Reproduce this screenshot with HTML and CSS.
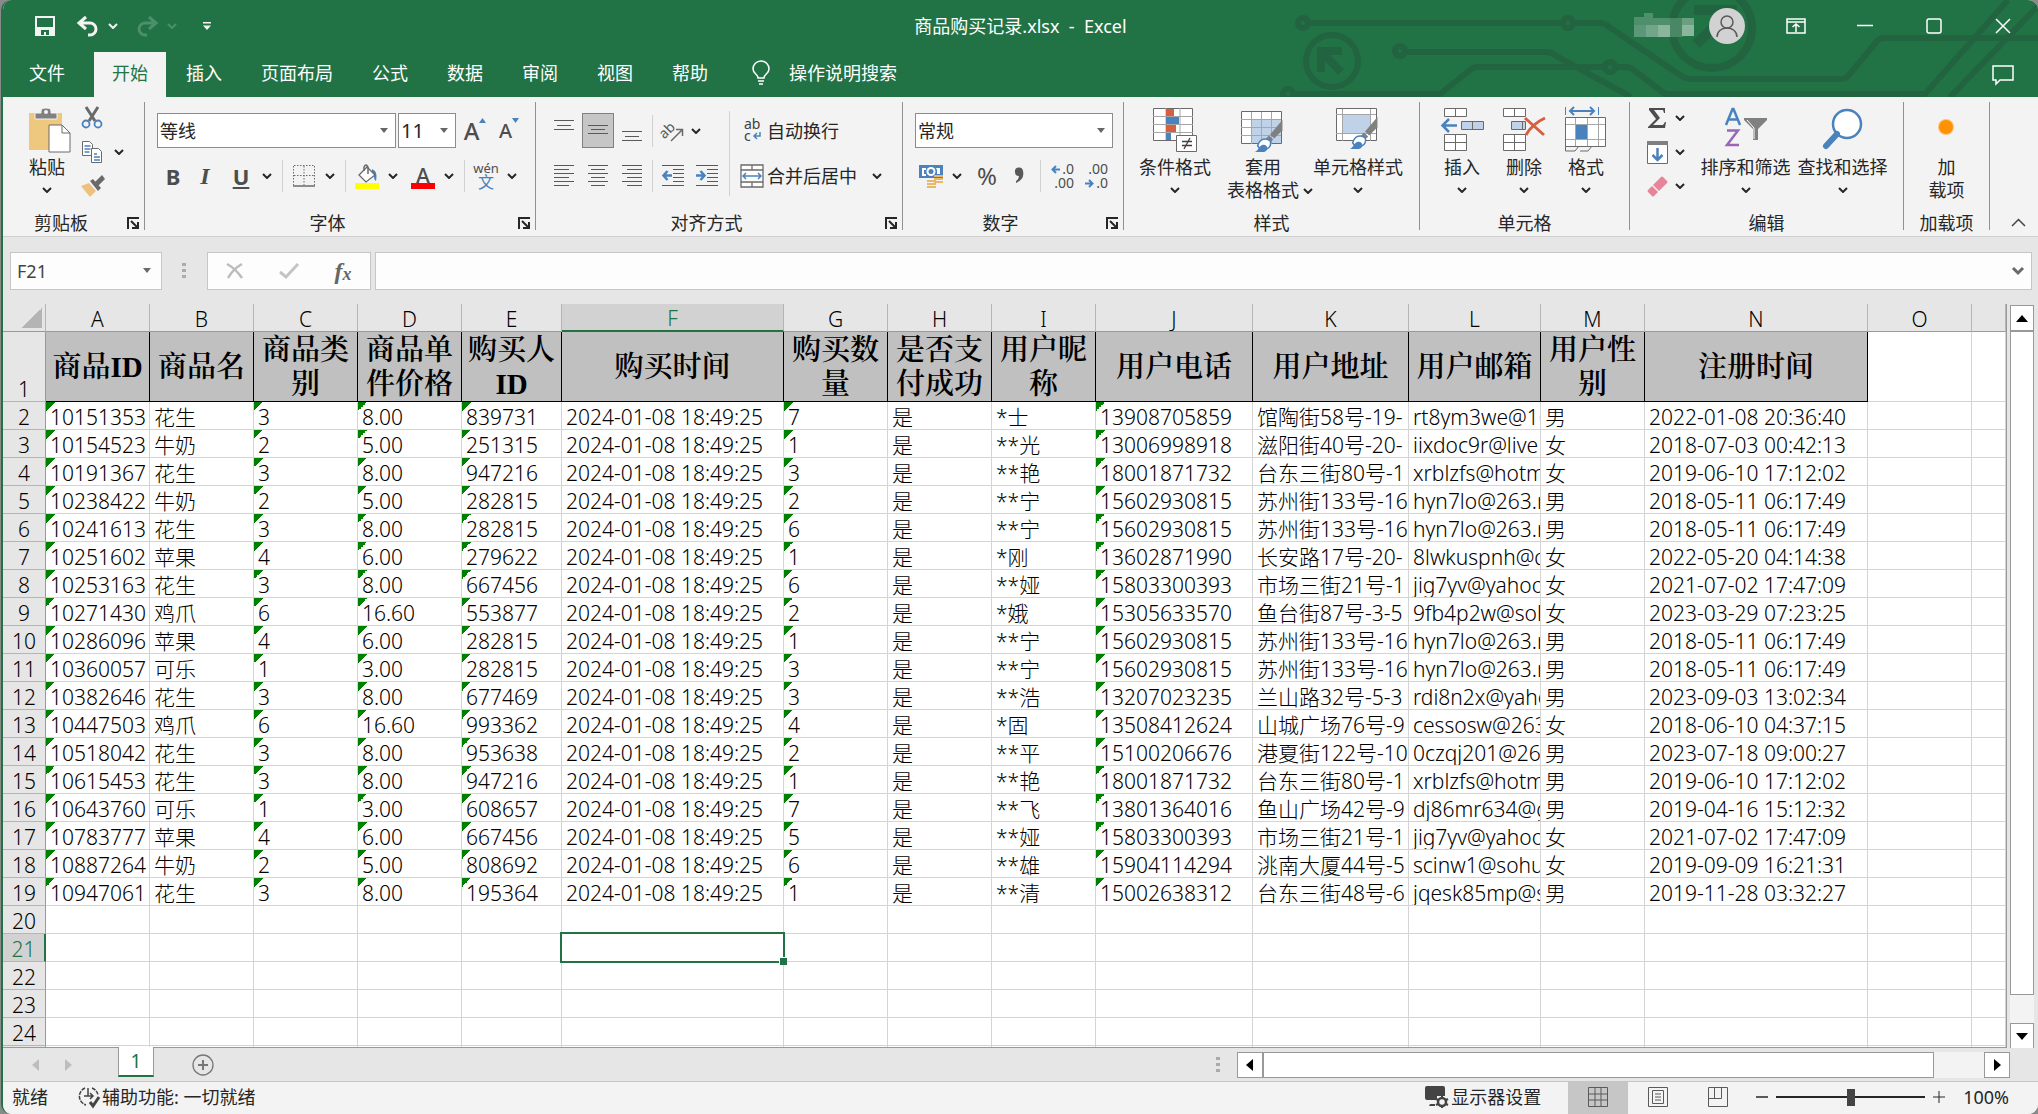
FILE: index.html
```html
<!DOCTYPE html>
<html lang="zh-CN">
<head>
<meta charset="utf-8">
<title>商品购买记录.xlsx - Excel</title>
<link rel="stylesheet" href="styles.css">
</head>
<body>
<svg class="defs" aria-hidden="true">
  <symbol id="caret" viewBox="0 0 10 6"><path d="M1 1l4 4 4-4" fill="none" stroke="currentColor" stroke-width="2"/></symbol>
  <symbol id="launch" viewBox="0 0 12 12"><path d="M1 12V1h11M4 4l6 6M11 5v6H5" fill="none" stroke="#262626" stroke-width="2"/></symbol>
  <symbol id="stylebrush" viewBox="0 0 27 32"><path d="M27 0v10l-8 8-4-4z" fill="#808080"/><path d="M14 15l4 4-3 3-4-4z" fill="#808080"/><path d="M3 25c2-7 8-8 12-5 2 5-2 10-9 9z" fill="#fff" stroke="#4a82bd" stroke-width="1.500"/><path d="M0 31c4-1 4-6 8-7 5-1 6 6 1 7z" fill="#4a82bd"/></symbol>
</svg>
<div class="window">
  <header class="top">
    <svg class="circuit" viewBox="0 0 798 97" width="798" height="97" fill="none" stroke="#236440" stroke-width="6" aria-hidden="true">
      <circle cx="63" cy="23" r="5"/><circle cx="328" cy="23" r="5"/><path d="M68 23H323M333 23H360Q365 23 369 27L440 75Q445 79 450 79H600Q606 79 609 75L637 41Q640 38 645 38H798"/>
      <circle cx="160" cy="51" r="5"/><path d="M165 52H306Q312 52 316 56L391 97"/>
      <circle cx="48" cy="94" r="5"/><path d="M53 94H198Q202 94 205 90L230 70Q233 67 238 67H365M375 67H385Q391 67 395 71L425 94H685L768 0M710 97L798 6"/><circle cx="370" cy="67" r="5"/>
      <circle cx="92" cy="61" r="26"/><path d="M81 72V51H102M82 52L101 72" stroke-width="8"/>
      <circle cx="472" cy="28" r="40" stroke-width="8"/><path d="M454 10H492V34M490 12L456 44" stroke-width="10"/>
    </svg>
    <div class="titlebar">
      <div class="quick">
        <button aria-label="保存"><svg width="20" height="20" viewBox="0 0 20 20"><path d="M1 1h18v18H1z" fill="none" stroke="#f3f3f3" stroke-width="2"/><path d="M2 11h16v8H2z" fill="#f3f3f3"/><path d="M6 14h8v5h-3v-3H9v3H6z" fill="#217346"/></svg></button>
        <button class="undo" aria-label="撤消"><svg width="22" height="20" viewBox="0 0 22 20"><path d="M9 1L2 7l7 6M2 7h11a6 6 0 0 1 0 12h-2" fill="none" stroke="#f3f3f3" stroke-width="3"/></svg><svg class="caret" width="10" height="6"><use href="#caret"/></svg></button>
        <button class="redo" aria-label="恢复"><svg width="22" height="20" viewBox="0 0 22 20"><path d="M13 1l7 6-7 6M20 7H9a6 6 0 0 0 0 12h2" fill="none" stroke="currentColor" stroke-width="3"/></svg><svg class="caret" width="10" height="6"><use href="#caret"/></svg></button>
        <button aria-label="自定义"><svg width="8" height="8" viewBox="0 0 8 8"><path d="M0 0h8v1.500H0zM0 3.500h8L4 8z" fill="#f3f3f3"/></svg></button>
      </div>
      <div class="title">商品购买记录.xlsx&nbsp; -&nbsp; Excel</div>
      <div class="sysbtns">
        <svg class="account" width="60" height="26" viewBox="0 0 60 26" aria-hidden="true"><path d="M0 4h10V0h9v12H0z" fill="#4f8f6c"/><path d="M19 5h17v7H19z" fill="#4f8f6c"/><path d="M0 12h12v12H0z" fill="#5c9877"/><path d="M12 12h12v12H12z" fill="#72a689"/><path d="M24 12h12v12H24z" fill="#8bb59d"/><path d="M36 5h13v19H36z" fill="#4a8765"/><path d="M48 5h12v7H48z" fill="#69a082"/><path d="M48 12h12v11H48z" fill="#8bb59d"/></svg>
        <button class="avatar" aria-label="帐户"><svg width="36" height="36" viewBox="0 0 36 36"><circle cx="18" cy="18" r="18" fill="#d2d2d2"/><g fill="none" stroke="#595959" stroke-width="1.500"><circle cx="18" cy="14" r="6"/><path d="M8 29c0-12 20-12 20 0"/></g></svg></button>
        <button aria-label="功能区显示选项"><svg width="20" height="16" viewBox="0 0 20 16" fill="none" stroke="#fff" stroke-width="1.500"><path d="M1 1h18v14H1zM1 4h18M10 14V6M6.500 9L10 6l3.500 3"/></svg></button>
        <button aria-label="最小化"><svg width="16" height="16" viewBox="0 0 16 16"><path d="M0 7.500h16" stroke="#fff" stroke-width="1.500"/></svg></button>
        <button aria-label="最大化"><svg width="16" height="16" viewBox="0 0 16 16"><rect x="1" y="1" width="14" height="14" rx="2" fill="none" stroke="#fff" stroke-width="1.500"/></svg></button>
        <button aria-label="关闭"><svg width="16" height="16" viewBox="0 0 16 16"><path d="M1 1l14 14M15 1L1 15" stroke="#fff" stroke-width="1.500"/></svg></button>
      </div>
    </div>
    <nav class="tabs">
      <button class="file">文件</button><button class="active">开始</button><button>插入</button><button>页面布局</button><button>公式</button><button>数据</button><button>审阅</button><button>视图</button><button>帮助</button>
      <button class="tell"><svg width="18" height="24" viewBox="0 0 18 24" fill="none" stroke="#fff" stroke-width="1.500"><path d="M6 17c0-4-5-4-5-9a8 8 0 0 1 16 0c0 5-5 5-5 9zM6 20h6M7 23h4"/></svg>操作说明搜索</button>
      <button class="comment" aria-label="批注"><svg width="22" height="20" viewBox="0 0 22 20"><path d="M1 1h20v14H8l-4 4v-4H1z" fill="none" stroke="#fff" stroke-width="1.500"/></svg></button>
    </nav>
  </header>

  <section class="ribbon">
    <div class="group g-clip">
      <div class="body">
        <button class="big"><svg width="42" height="46" viewBox="0 0 42 46"><path d="M0 6h33v37H0z" fill="#edc87e"/><path d="M6 12V6h6V4q0-3 5-3t5 3v2h6v6z" fill="#808080" stroke="#f3f3f3"/><circle cx="17" cy="5" r="2" fill="#f3f3f3"/><path d="M20 18h13l8 8v19H20z" fill="#fff" stroke="#6a6a6a"/><path d="M33 18v8h8" fill="none" stroke="#6a6a6a"/></svg><span>粘贴</span><svg class="caret" width="10" height="6"><use href="#caret"/></svg></button>
        <div class="stack">
          <button aria-label="剪切"><svg width="22" height="24" viewBox="0 0 22 24" fill="none"><path d="M5 1l9 14M17 1L8 15" stroke="#6a6a6a" stroke-width="3"/><circle cx="5" cy="18" r="3.500" stroke="#4a82bd" stroke-width="1.800"/><circle cx="17" cy="18" r="3.500" stroke="#4a82bd" stroke-width="1.800"/></svg></button>
          <button aria-label="复制"><svg width="22" height="24" viewBox="0 0 22 24" fill="#fff" stroke="#6a6a6a"><path d="M1.500 1.500h7l3 3v11h-10z"/><path d="M10.500 8.500h7l3 3v11h-10z"/><path d="M3.500 6h6M3.500 9h6M3.500 12h5M13 14h3M13 17h6M13 20h6" stroke="#4a82bd" stroke-width="1.500"/></svg><svg class="caret" width="10" height="6"><use href="#caret"/></svg></button>
          <button aria-label="格式刷"><svg width="24" height="22" viewBox="0 0 24 22"><path d="M0 11l8-3 7 8-6 6z" fill="#edc07e"/><path d="M9 6l3-2 8 9-3 3z" fill="#6a6a6a"/><path d="M14 7l7-7 3 4-7 7z" fill="#6a6a6a"/></svg></button>
        </div>
      </div>
      <div class="foot"><span>剪贴板</span><button aria-label="剪贴板设置"><svg width="12" height="12"><use href="#launch"/></svg></button></div>
    </div>

    <div class="group g-font">
      <div class="body rows">
        <div class="r1">
          <select class="font-name" aria-label="字体"><option>等线</option></select>
          <select class="font-size" aria-label="字号"><option>11</option></select>
          <button class="t grow" aria-label="增大字号"><b>A</b><svg width="7" height="5" viewBox="0 0 7 5"><path d="M0 5l3.500-5L7 5z" fill="#4a82bd"/></svg></button>
          <button class="t shrink" aria-label="减小字号"><b>A</b><svg width="7" height="5" viewBox="0 0 7 5"><path d="M0 0h7L3.500 5z" fill="#4a82bd"/></svg></button>
        </div>
        <div class="r2">
          <button class="t ch"><b>B</b></button><button class="t ch it"><b>I</b></button><button class="t ch un"><b>U</b></button><button class="c" aria-label="下划线选项"><svg width="10" height="6"><use href="#caret"/></svg></button>
          <i class="sep"></i>
          <button class="t" aria-label="边框"><svg width="22" height="22" viewBox="0 0 22 22"><path d="M1 .5h20M.5 1v19M21.500 1v19M11 1v19M1 10.500h20" stroke="#6a6a6a" stroke-dasharray="1.500 1.500"/><path d="M0 21h22" stroke="#6a6a6a" stroke-width="1.500"/></svg></button><button class="c" aria-label="边框选项"><svg width="10" height="6"><use href="#caret"/></svg></button>
          <i class="sep"></i>
          <button class="t" aria-label="填充颜色"><svg width="24" height="25" viewBox="0 0 24 25"><path d="M17 5c5 2 5 7 4 12-3-2-1-6-4-8z" fill="#4a82bd"/><path d="M12 3l8 8-9 7-7-7z" fill="#fff" stroke="#6a6a6a" stroke-width="1.300"/><path d="M9 7V3q2-4 4 0v7" fill="none" stroke="#6a6a6a" stroke-width="1.500"/><path d="M0 19h24v6H0z" fill="#ff0"/></svg></button><button class="c" aria-label="填充颜色选项"><svg width="10" height="6"><use href="#caret"/></svg></button>
          <button class="t fc" aria-label="字体颜色"><b>A</b></button><button class="c" aria-label="字体颜色选项"><svg width="10" height="6"><use href="#caret"/></svg></button>
          <i class="sep"></i>
          <button class="t wen"><small>wén</small><em>文</em></button><button class="c" aria-label="拼音选项"><svg width="10" height="6"><use href="#caret"/></svg></button>
        </div>
      </div>
      <div class="foot"><span>字体</span><button aria-label="字体设置"><svg width="12" height="12"><use href="#launch"/></svg></button></div>
    </div>

    <div class="group g-align">
      <div class="body">
        <div class="rows">
          <div class="r1">
            <button class="t" aria-label="顶端对齐"><svg width="20" height="30" viewBox="0 0 20 30" stroke="#595959"><path d="M0 4.500h20M3 9.500h14M0 13.500h20"/></svg></button>
            <button class="t on" aria-label="垂直居中"><svg width="20" height="30" viewBox="0 0 20 30" stroke="#595959"><path d="M0 9.500h20M3 13.500h14M0 17.500h20"/></svg></button>
            <button class="t" aria-label="底端对齐"><svg width="20" height="30" viewBox="0 0 20 30" stroke="#595959"><path d="M0 15.500h20M3 20.500h14M0 24.500h20"/></svg></button>
            <i class="sep"></i>
            <button class="pair" aria-label="方向"><svg width="22" height="22" viewBox="0 0 22 22"><text x="-2" y="13" transform="rotate(-45 8 11)" class="ab">ab</text><path d="M9 21L20 10M14 9.500h6.500V16" fill="none" stroke="#6a6a6a" stroke-width="1.500"/></svg><svg class="caret" width="10" height="6"><use href="#caret"/></svg></button>
          </div>
          <div class="r2">
            <button class="t" aria-label="左对齐"><svg width="20" height="22" viewBox="0 0 20 22" stroke="#595959"><path d="M0 .5h20M0 4.500h15M0 8.500h20M0 12.500h15M0 16.500h20M0 20.500h15"/></svg></button>
            <button class="t" aria-label="居中"><svg width="20" height="22" viewBox="0 0 20 22" stroke="#595959"><path d="M0 .5h20M3 4.500h14M0 8.500h20M3 12.500h14M0 16.500h20M3 20.500h14"/></svg></button>
            <button class="t" aria-label="右对齐"><svg width="20" height="22" viewBox="0 0 20 22" stroke="#595959"><path d="M0 .5h20M5 4.500h15M0 8.500h20M5 12.500h15M0 16.500h20M5 20.500h15"/></svg></button>
            <i class="sep"></i>
            <button class="t" aria-label="减少缩进"><svg width="22" height="22" viewBox="0 0 22 22" stroke="#595959"><path d="M0 .5h22M11 4.500h11M11 8.500h11M11 12.500h11M11 16.500h11M0 20.500h22"/><path d="M10 10.500H2M5.500 6L1.500 10.500l4 4.500" fill="none" stroke="#4a82bd" stroke-width="2.500"/></svg></button>
            <button class="t" aria-label="增加缩进"><svg width="22" height="22" viewBox="0 0 22 22" stroke="#595959"><path d="M0 .5h22M11 4.500h11M11 8.500h11M11 12.500h11M11 16.500h11M0 20.500h22"/><path d="M0 10.500h8M4.500 6l4 4.500-4 4.500" fill="none" stroke="#4a82bd" stroke-width="2.500"/></svg></button>
          </div>
        </div>
        <i class="sep tall"></i>
        <div class="rows wide">
          <div class="r1"><button class="txt"><svg width="24" height="24" viewBox="0 0 24 24"><text x="4" y="10" class="abc">ab</text><text x="4" y="22" class="abc">c</text><path d="M20 13v4h-5M17 14l-3 3 3 3" fill="none" stroke="#4a82bd" stroke-width="1.500"/></svg>自动换行</button></div>
          <div class="r2"><button class="txt"><svg width="24" height="24" viewBox="0 0 24 24"><path d="M1 1h22v22H1zM1 6h22M1 18h22M12 1v5M12 18v5" fill="#fff" stroke="#6a6a6a" stroke-width="1.300"/><path d="M3 12h18M6 9l-3 3 3 3M18 9l3 3-3 3" fill="none" stroke="#4a82bd" stroke-width="1.500"/></svg>合并后居中</button><button class="c" aria-label="合并选项"><svg width="10" height="6"><use href="#caret"/></svg></button></div>
        </div>
      </div>
      <div class="foot"><span>对齐方式</span><button aria-label="对齐设置"><svg width="12" height="12"><use href="#launch"/></svg></button></div>
    </div>

    <div class="group g-num">
      <div class="body rows">
        <div class="r1"><select class="num-fmt" aria-label="数字格式"><option>常规</option></select></div>
        <div class="r2">
          <button class="t" aria-label="会计数字格式"><svg width="24" height="24" viewBox="0 0 24 24"><path d="M0 1h24v13H0z" fill="#4a82bd"/><path d="M3 4h4v2H5v4h2v2H3zM17 4h4v6h-3V6z" fill="#fff"/><circle cx="12" cy="7.500" r="4.500" fill="#fff"/><circle cx="12" cy="7.500" r="2.500" fill="#4a82bd"/><g stroke="#e8b96a" stroke-width="2"><path d="M15 12h9M15 15h9M15 18h9M8 17h9M8 20h9M8 23h9"/></g></svg></button><button class="c" aria-label="货币选项"><svg width="10" height="6"><use href="#caret"/></svg></button>
          <button class="t pct">%</button>
          <button class="t" aria-label="千位分隔样式"><svg width="10" height="16" viewBox="0 0 10 16"><path d="M1 4a4 4 0 0 1 8-1q2 8-7 12V13q3-2 3-5-4 0-4-4z" fill="#595959"/></svg></button>
          <i class="sep"></i>
          <button class="t dec" aria-label="增加小数位数"><span><svg width="9" height="9" viewBox="0 0 9 9"><path d="M9 4.500H2M5 1L1.500 4.500 5 8" fill="none" stroke="#4a82bd" stroke-width="2"/></svg>.0</span><span>.00</span></button>
          <button class="t dec" aria-label="减少小数位数"><span>.00</span><span><svg width="9" height="9" viewBox="0 0 9 9"><path d="M0 4.500h7M4 1l3.500 3.500L4 8" fill="none" stroke="#4a82bd" stroke-width="2"/></svg>.0</span></button>
        </div>
      </div>
      <div class="foot"><span>数字</span><button aria-label="数字设置"><svg width="12" height="12"><use href="#launch"/></svg></button></div>
    </div>

    <div class="group g-style">
      <div class="body">
        <button class="big"><svg width="44" height="46" viewBox="0 0 44 46"><path d="M.5 1.500h39v32H.5z" fill="#fff" stroke="#6a6a6a"/><path d="M13 1v32M27 1v32M0 9.500h40M0 17.500h40M0 25.500h40" stroke="#a6a6a6"/><path d="M13 2h8v7h-8zM13 18h10v7H13z" fill="#d75f40"/><path d="M13 10h13v7H13zM13 26h5v7h-5z" fill="#4a82bd"/><path d="M23.500 28.500h20v16h-20z" fill="#fff" stroke="#6a6a6a"/><path d="M29 34.500h10M29 38.500h10M37 31l-6 11" stroke="#404040" stroke-width="1.300"/></svg><span>条件格式</span><svg class="caret" width="10" height="6"><use href="#caret"/></svg></button>
        <button class="big"><svg width="44" height="46" viewBox="0 0 44 46"><path d="M.5 4.500h40v32H.5z" fill="#fff" stroke="#6a6a6a"/><path d="M11 13h29v23H11z" fill="#bfd2e8"/><path d="M10.500 5v32M20.500 5v32M30.500 5v32M0 12.500h40M0 20.500h40M0 28.500h40" stroke="#a6a6a6"/><use href="#stylebrush" x="11" y="13" width="33" height="33"/></svg><span>套用</span><span class="with-caret">表格格式<svg class="caret" width="10" height="6"><use href="#caret"/></svg></span></button>
        <button class="big"><svg width="44" height="46" viewBox="0 0 44 46"><path d="M.5 1.500h40v32H.5z" fill="#fff" stroke="#6a6a6a"/><path d="M6.500 2v32M34.500 2v32M0 7.500h40M0 26.500h40" stroke="#a6a6a6"/><path d="M7 8h27v18H7z" fill="#bfd2e8"/><use href="#stylebrush" x="11" y="10" width="33" height="33"/></svg><span>单元格样式</span><svg class="caret" width="10" height="6"><use href="#caret"/></svg></button>
      </div>
      <div class="foot"><span>样式</span></div>
    </div>

    <div class="group g-cell">
      <div class="body">
        <button class="big"><svg width="44" height="46" viewBox="0 0 44 46"><g fill="#fff" stroke="#6a6a6a"><path d="M4.500 1.500h22v8h-22zM15.500 1v8M4.500 27.500h22v16h-22zM15.500 27v16M4 35.500h22"/><path d="M21.500 14.500h22v8h-22zM32.500 14v8" fill="#bfd2e8"/></g><path d="M17 18.500H3M9 12l-6.500 6.500L9 25" fill="none" stroke="#4a82bd" stroke-width="2.500"/></svg><span>插入</span><svg class="caret" width="10" height="6"><use href="#caret"/></svg></button>
        <button class="big"><svg width="44" height="46" viewBox="0 0 44 46"><g fill="#fff" stroke="#6a6a6a"><path d="M1.500 1.500h22v8h-22zM12.500 1v8M1.500 27.500h22v16h-22zM12.500 27v16M1 35.500h22"/><path d="M9.500 14.500h14v8h-14zM20.500 14v8" fill="#bfd2e8"/></g><path d="M23 11l19 17M43 11Q30 17 24 28" fill="none" stroke="#d75f40" stroke-width="3"/></svg><span>删除</span><svg class="caret" width="10" height="6"><use href="#caret"/></svg></button>
        <button class="big"><svg width="44" height="46" viewBox="0 0 44 46"><path d="M1.500 39v5H11l4-5M16 44h8l4-5" fill="none" stroke="#6a6a6a"/><path d="M1.500 10.500h40v29h-40z" fill="#fff" stroke="#6a6a6a"/><path d="M11.500 11v28M23.500 11v28M34.500 11v28M2 17.500h39M2 32.500h39" stroke="#a6a6a6"/><path d="M12 18h11v14H12z" fill="#4a82bd"/><path d="M1.500 0v8M34.500 0v8" stroke="#4a82bd"/><path d="M6 4h24M10 0L6 4l4 4M26 0l4 4-4 4" fill="none" stroke="#4a82bd" stroke-width="2"/></svg><span>格式</span><svg class="caret" width="10" height="6"><use href="#caret"/></svg></button>
      </div>
      <div class="foot"><span>单元格</span></div>
    </div>

    <div class="group g-edit">
      <div class="body">
        <div class="stack">
          <button aria-label="自动求和"><svg width="21" height="20" viewBox="0 0 21 20"><path d="M2 0h16v5h-1l-1-3H7l6 8-7 7h10l2-3h1l-1 6H1v-1l8-8-7-9z" fill="#4d4d4d"/></svg><svg class="caret" width="10" height="6"><use href="#caret"/></svg></button>
          <button aria-label="填充"><svg width="21" height="23" viewBox="0 0 21 23"><path d="M.5.5h20v22H.5z" fill="#fff" stroke="#6a6a6a"/><path d="M0 0h21v4H0z" fill="#808080"/><path d="M10.500 7v12M5.500 14l5 5 5-5" fill="none" stroke="#4a82bd" stroke-width="2.500"/></svg><svg class="caret" width="10" height="6"><use href="#caret"/></svg></button>
          <button aria-label="清除"><svg width="21" height="21" viewBox="0 0 21 21"><path d="M14 1q1-1 2 0l4 4q1 1 0 2l-8 8-6-6z" fill="#e8849a"/><path d="M5 10l6 6-4 4q-1 1-2 0l-4-4q-1-1 0-2z" fill="#e8849a"/></svg><svg class="caret" width="10" height="6"><use href="#caret"/></svg></button>
        </div>
        <button class="big"><svg width="44" height="46" viewBox="0 0 44 46"><path d="M2 18L8.500 2h1L16 18M4.500 12.500h9" fill="none" stroke="#4a82bd" stroke-width="2.500"/><path d="M3 23.500h11L3 38h12" fill="none" stroke="#9a66b8" stroke-width="2.500"/><path d="M20 11h23v2l-9 9v11h-5V22l-9-9z" fill="#808080"/><path d="M23 13l7 8v11" fill="none" stroke="#fff"/></svg><span>排序和筛选</span><svg class="caret" width="10" height="6"><use href="#caret"/></svg></button>
        <button class="big"><svg width="44" height="46" viewBox="0 0 44 46"><circle cx="26" cy="17" r="14" fill="#fff" stroke="#4a82bd" stroke-width="2.500"/><path d="M16 27L5 39" stroke="#4a82bd" stroke-width="6" stroke-linecap="round"/></svg><span>查找和选择</span><svg class="caret" width="10" height="6"><use href="#caret"/></svg></button>
      </div>
      <div class="foot"><span>编辑</span></div>
    </div>

    <div class="group g-add">
      <div class="body"><button class="big"><svg width="44" height="46" viewBox="0 0 44 46"><circle cx="21" cy="20" r="8" fill="#ffc47a"/><circle cx="21" cy="20" r="7" fill="#ff9204"/></svg><span>加</span><span>载项</span></button></div>
      <div class="foot"><span>加载项</span></div>
    </div>
    <button class="collapse" aria-label="折叠功能区"><svg width="15" height="9" viewBox="0 0 15 9"><path d="M1 8l6.500-6.500L14 8" fill="none" stroke="#444" stroke-width="1.500"/></svg></button>
  </section>

  <section class="formula">
    <div class="namebox"><input aria-label="名称框" value="F21"><button aria-label="名称"><svg width="8" height="5" viewBox="0 0 8 5"><path d="M0 0h8L4 5z" fill="#6a6a6a"/></svg></button></div>
    <i class="grip"></i>
    <div class="fx">
      <button aria-label="取消"><svg width="18" height="16" viewBox="0 0 18 16"><path d="M1 1q9 5 15 14M16 1Q7 6 2 15" fill="none" stroke="#bcbcbc" stroke-width="2.500"/></svg></button>
      <button aria-label="输入"><svg width="20" height="16" viewBox="0 0 20 16"><path d="M1 9l6 5L19 1" fill="none" stroke="#c4c4c4" stroke-width="3"/></svg></button>
      <button class="fxb" aria-label="插入函数"><i>f</i><i>x</i></button>
    </div>
    <div class="fbar"><input aria-label="编辑栏"><button aria-label="展开编辑栏"><svg width="12" height="8" viewBox="0 0 12 8"><path d="M1 1l5 5 5-5" fill="none" stroke="#6a6a6a" stroke-width="3"/></svg></button></div>
  </section>

  <main class="sheet">
    <div class="grid">
      <table>
        <colgroup><col class="wr"><col class="w104"><col class="w104"><col class="w104"><col class="w104"><col class="w100"><col class="w222"><col class="w104"><col class="w104"><col class="w104"><col class="w157"><col class="w156"><col class="w132"><col class="w104"><col class="w223"><col class="w104"><col></colgroup>
        <thead>
          <tr><th class="corner"><th>A<th>B<th>C<th>D<th>E<th class="sel">F<th>G<th>H<th>I<th>J<th>K<th>L<th>M<th>N<th>O<th></tr>
        </thead>
        <tbody>
          <tr class="heads"><th>1<td>商品ID<td>商品名<td>商品类别<td>商品单件价格<td>购买人ID<td>购买时间<td>购买数量<td>是否支付成功<td>用户昵称<td>用户电话<td>用户地址<td>用户邮箱<td>用户性别<td>注册时间<td><td></tr>
          <tr class="rec"><th>2<td>10151353<td>花生<td>3<td>8.00<td>839731<td>2024-01-08 18:49:25<td>7<td>是<td>*士<td>13908705859<td>馆陶街58号-19-<td>rt8ym3we@16<td>男<td>2022-01-08 20:36:40<td><td></tr>
          <tr class="rec"><th>3<td>10154523<td>牛奶<td>2<td>5.00<td>251315<td>2024-01-08 18:49:25<td>1<td>是<td>**光<td>13006998918<td>滋阳街40号-20-<td>iixdoc9r@live<td>女<td>2018-07-03 00:42:13<td><td></tr>
          <tr class="rec"><th>4<td>10191367<td>花生<td>3<td>8.00<td>947216<td>2024-01-08 18:49:25<td>3<td>是<td>**艳<td>18001871732<td>台东三街80号-1<td>xrblzfs@hotm<td>女<td>2019-06-10 17:12:02<td><td></tr>
          <tr class="rec"><th>5<td>10238422<td>牛奶<td>2<td>5.00<td>282815<td>2024-01-08 18:49:25<td>2<td>是<td>**宁<td>15602930815<td>苏州街133号-16<td>hyn7lo@263.n<td>男<td>2018-05-11 06:17:49<td><td></tr>
          <tr class="rec"><th>6<td>10241613<td>花生<td>3<td>8.00<td>282815<td>2024-01-08 18:49:25<td>6<td>是<td>**宁<td>15602930815<td>苏州街133号-16<td>hyn7lo@263.n<td>男<td>2018-05-11 06:17:49<td><td></tr>
          <tr class="rec"><th>7<td>10251602<td>苹果<td>4<td>6.00<td>279622<td>2024-01-08 18:49:25<td>1<td>是<td>*刚<td>13602871990<td>长安路17号-20-<td>8lwkuspnh@q<td>女<td>2022-05-20 04:14:38<td><td></tr>
          <tr class="rec"><th>8<td>10253163<td>花生<td>3<td>8.00<td>667456<td>2024-01-08 18:49:25<td>6<td>是<td>**娅<td>15803300393<td>市场三街21号-1<td>jig7yv@yahoo<td>女<td>2021-07-02 17:47:09<td><td></tr>
          <tr class="rec"><th>9<td>10271430<td>鸡爪<td>6<td>16.60<td>553877<td>2024-01-08 18:49:25<td>2<td>是<td>*娥<td>15305633570<td>鱼台街87号-3-5<td>9fb4p2w@soh<td>女<td>2023-03-29 07:23:25<td><td></tr>
          <tr class="rec"><th>10<td>10286096<td>苹果<td>4<td>6.00<td>282815<td>2024-01-08 18:49:25<td>1<td>是<td>**宁<td>15602930815<td>苏州街133号-16<td>hyn7lo@263.n<td>男<td>2018-05-11 06:17:49<td><td></tr>
          <tr class="rec"><th>11<td>10360057<td>可乐<td>1<td>3.00<td>282815<td>2024-01-08 18:49:25<td>3<td>是<td>**宁<td>15602930815<td>苏州街133号-16<td>hyn7lo@263.n<td>男<td>2018-05-11 06:17:49<td><td></tr>
          <tr class="rec"><th>12<td>10382646<td>花生<td>3<td>8.00<td>677469<td>2024-01-08 18:49:25<td>3<td>是<td>**浩<td>13207023235<td>兰山路32号-5-3<td>rdi8n2x@yaho<td>男<td>2023-09-03 13:02:34<td><td></tr>
          <tr class="rec"><th>13<td>10447503<td>鸡爪<td>6<td>16.60<td>993362<td>2024-01-08 18:49:25<td>4<td>是<td>*固<td>13508412624<td>山城广场76号-9<td>cessosw@263<td>女<td>2018-06-10 04:37:15<td><td></tr>
          <tr class="rec"><th>14<td>10518042<td>花生<td>3<td>8.00<td>953638<td>2024-01-08 18:49:25<td>2<td>是<td>**平<td>15100206676<td>港夏街122号-10<td>0czqj201@26<td>男<td>2023-07-18 09:00:27<td><td></tr>
          <tr class="rec"><th>15<td>10615453<td>花生<td>3<td>8.00<td>947216<td>2024-01-08 18:49:25<td>1<td>是<td>**艳<td>18001871732<td>台东三街80号-1<td>xrblzfs@hotm<td>男<td>2019-06-10 17:12:02<td><td></tr>
          <tr class="rec"><th>16<td>10643760<td>可乐<td>1<td>3.00<td>608657<td>2024-01-08 18:49:25<td>7<td>是<td>**飞<td>13801364016<td>鱼山广场42号-9<td>dj86mr634@g<td>男<td>2019-04-16 15:12:32<td><td></tr>
          <tr class="rec"><th>17<td>10783777<td>苹果<td>4<td>6.00<td>667456<td>2024-01-08 18:49:25<td>5<td>是<td>**娅<td>15803300393<td>市场三街21号-1<td>jig7yv@yahoo<td>女<td>2021-07-02 17:47:09<td><td></tr>
          <tr class="rec"><th>18<td>10887264<td>牛奶<td>2<td>5.00<td>808692<td>2024-01-08 18:49:25<td>6<td>是<td>**雄<td>15904114294<td>洮南大厦44号-5<td>scinw1@sohu<td>女<td>2019-09-09 16:21:31<td><td></tr>
          <tr class="rec"><th>19<td>10947061<td>花生<td>3<td>8.00<td>195364<td>2024-01-08 18:49:25<td>1<td>是<td>**清<td>15002638312<td>台东三街48号-6<td>jqesk85mp@s<td>男<td>2019-11-28 03:32:27<td><td></tr>
          <tr><th>20
            <td><td><td><td>
            <td><td><td><td>
            <td><td><td><td>
            <td><td><td><td></tr>
          <tr><th class="sel">21
            <td><td><td><td>
            <td><td class="cursor"><td><td>
            <td><td><td><td>
            <td><td><td><td></tr>
          <tr><th>22
            <td><td><td><td>
            <td><td><td><td>
            <td><td><td><td>
            <td><td><td><td></tr>
          <tr><th>23
            <td><td><td><td>
            <td><td><td><td>
            <td><td><td><td>
            <td><td><td><td></tr>
          <tr><th>24
            <td><td><td><td>
            <td><td><td><td>
            <td><td><td><td>
            <td><td><td><td></tr>
          <tr><th>
            <td><td><td><td>
            <td><td><td><td>
            <td><td><td><td>
            <td><td><td><td></tr>
        </tbody>
      </table>
    </div>
    <div class="vscroll">
      <button aria-label="向上滚动"><svg width="12" height="7" viewBox="0 0 12 7"><path d="M0 7l6-7 6 7z"/></svg></button>
      <div class="vtrack"><div class="thumb"></div></div>
      <button aria-label="向下滚动"><svg width="12" height="7" viewBox="0 0 12 7"><path d="M0 0h12L6 7z"/></svg></button>
    </div>
  </main>

  <section class="sheetbar">
    <button class="nav" aria-label="上一工作表"><svg width="7" height="12" viewBox="0 0 7 12"><path d="M7 0v12L0 6z" fill="#bdbdbd"/></svg></button>
    <button class="nav" aria-label="下一工作表"><svg width="7" height="12" viewBox="0 0 7 12"><path d="M0 0v12l7-6z" fill="#bdbdbd"/></svg></button>
    <button class="sheet-tab">1</button>
    <button class="add" aria-label="新工作表"><svg width="22" height="22" viewBox="0 0 22 22" fill="none" stroke="#777"><circle cx="11" cy="11" r="10" stroke-width="1.300"/><path d="M11 6v10M6 11h10" stroke-width="2"/></svg></button>
    <i class="grip"></i>
    <div class="hscroll">
      <button aria-label="向左滚动"><svg width="7" height="12" viewBox="0 0 7 12"><path d="M7 0v12L0 6z"/></svg></button>
      <div class="htrack"><div class="thumb"></div></div>
      <button aria-label="向右滚动"><svg width="7" height="12" viewBox="0 0 7 12"><path d="M0 0v12l7-6z"/></svg></button>
    </div>
  </section>

  <footer class="status">
    <span>就绪</span>
    <button class="acc"><svg width="22" height="22" viewBox="0 0 22 22" fill="none" stroke="#444" stroke-width="1.500"><path d="M7 2a9 9 0 0 0 1 17M14 2q5 2 6 7" stroke-dasharray="4 1"/><path d="M10 2v8M6 10h9M12 7l3 3-3 3"/><path d="M12 16l3 4 6-9" stroke-width="3"/></svg>辅助功能: 一切就绪</button>
    <button class="disp"><svg width="24" height="22" viewBox="0 0 24 22"><path d="M0 2q0-2 2-2h16q2 0 2 2v8h-8v4H2q-2 0-2-2zM5 18h5v2H4z" fill="#444"/><circle cx="17" cy="16" r="4" fill="none" stroke="#444" stroke-width="2.500"/><path d="M17 9v3M17 20v2M11 13l2 1M21 18l2 1M11 19l2-1M21 14l2-1" stroke="#444" stroke-width="2"/></svg>显示器设置</button>
    <button class="view on" aria-label="普通"><svg width="20" height="20" viewBox="0 0 20 20"><path d="M.5.5h19v19H.5zM7 1v18M13 1v18M1 7h18M1 13h18" fill="none" stroke="#5a5a5a"/></svg></button>
    <button class="view" aria-label="页面布局"><svg width="20" height="20" viewBox="0 0 20 20"><path d="M.5.5h19v19H.5zM4.500 3.500h11v13h-11zM7 7h6M7 10h6M7 13h6" fill="none" stroke="#5a5a5a"/></svg></button>
    <button class="view" aria-label="分页预览"><svg width="20" height="20" viewBox="0 0 20 20"><path d="M.5.5h19v19H.5zM.500 11.500h13v-11M6.500 1v10" fill="none" stroke="#5a5a5a"/></svg></button>
    <button class="zb" aria-label="缩小"><svg width="12" height="12" viewBox="0 0 12 12"><path d="M0 6h12" stroke="#262626" stroke-width="1.500"/></svg></button>
    <input type="range" min="0" max="100" value="50" aria-label="缩放">
    <button class="zb" aria-label="放大"><svg width="12" height="12" viewBox="0 0 12 12"><path d="M0 6h12M6 0v12" stroke="#262626"/></svg></button>
    <span class="pc">100%</span>
  </footer>
</div>
</body>
</html>
```
FILE: styles.css
```css
* { box-sizing: border-box; }
body { margin: 0; background: #8a8a8a; font: 18px/20px "Noto Sans", "Noto Sans CJK SC", sans-serif; color: #262626; }
button, input, select { font: inherit; color: inherit; border: 0; padding: 0; margin: 0; background: none; border-radius: 0; outline: 0; min-width: 0; }
button { display: flex; align-items: center; justify-content: center; flex: none; white-space: nowrap; }
svg { flex: none; display: block; overflow: visible; }
.defs { position: absolute; width: 0; height: 0; }
.window { height: 100vh; margin-left: 1px; display: flex; flex-direction: column; border-left: 2px solid #217346; border-radius: 10px; overflow: hidden; background: #f3f3f3; }

/* title bar and ribbon tabs */
.top { position: relative; background: #217346; color: #fff; overflow: hidden; flex: none; }
.circuit { position: absolute; right: 0; top: 0; }
.titlebar { position: relative; height: 52px; display: grid; grid-template-columns: 1fr auto 1fr; align-items: center; }
.quick { display: flex; align-items: center; padding-left: 32px; gap: 22px; }
.quick .undo, .quick .redo { gap: 9px; color: #f3f3f3; }
.quick .redo { color: #4c8f6b; margin-left: -4px; }
.quick button:last-child { margin-left: 4px; }
.sysbtns { display: flex; align-items: center; justify-content: flex-end; padding-right: 19px; }
.sysbtns button { width: 70px; height: 48px; margin-right: -1px; }
.sysbtns .account { margin-right: 14px; }
.sysbtns .avatar { width: 38px; margin-right: 15px; }
.sysbtns button:last-child { margin: 0 -19px 0 0; }
.tabs { position: relative; height: 45px; display: flex; gap: 1px; padding-left: 7px; }
.tabs button { padding: 0 19px 3px; }
.tabs .file { margin-right: 9px; }
.tabs .active { background: #f3f3f3; color: #217346; padding: 0 18px 3px; }
.tabs .tell { gap: 19px; padding-left: 24px; }
.tabs .comment { margin-left: auto; padding: 13px 24px 0 0; align-items: flex-start; }

/* ribbon */
.ribbon { height: 140px; flex: none; display: flex; padding: 5px 0 6px; border-bottom: 1px solid #cfcfcf; }
.group { display: flex; flex-direction: column; border-right: 1px solid #919191; flex: none; }
.g-clip { width: 142px; } .g-font { width: 391px; } .g-align { width: 367px; } .g-num { width: 221px; }
.g-style { width: 296px; } .g-cell { width: 210px; } .g-edit { width: 274px; } .g-add { width: 86px; }
.body { flex: 1; display: flex; }
.foot { display: flex; height: 14px; line-height: 14px; align-items: center; padding-right: 5px; }
.foot span { flex: 1; text-align: center; }
.foot button { margin-left: -8px; width: 20px; justify-content: flex-end; }
.foot:has(button) span { padding-right: 8px; }
.foot:not(:has(button)) { padding: 0; }
.caret { color: #262626; }
.quick .caret { color: inherit; }
.big { flex-direction: column; justify-content: flex-start; padding-top: 5px; line-height: 23px; }
.big > svg:first-child { margin-bottom: 3px; }
.big > .caret { margin-top: 8px; }
.with-caret { display: flex; align-items: center; gap: 4px; margin-right: -14px; }
.rows { display: flex; flex-direction: column; gap: 12px; padding-top: 11px; }
.r1, .r2 { display: flex; align-items: center; }
.r1 { height: 35px; }
.r2 { height: 32px; }
.t { width: 32px; height: 32px; color: #4d4d4d; }
.c { width: 20px; height: 32px; }
.sep { width: 1px; height: 32px; background: #d0d0d0; margin: 0 5px; flex: none; }
select { appearance: none; height: 35px; border: 1px solid #8c8c8c; background: #fff url("data:image/svg+xml,%3Csvg xmlns='http://www.w3.org/2000/svg' width='8' height='5'%3E%3Cpath d='M0 0h8L4 5z' fill='%23666'/%3E%3C/svg%3E") no-repeat right 7px center; padding: 0 2px; color: #262626; }

.g-clip .big { width: 42px; margin-left: 26px; }
.g-clip .big > span, .g-clip .big > .caret { margin-right: 6px; }
.stack { display: flex; flex-direction: column; gap: 10px; padding: 4px 0 0 10px; }
.stack button { justify-content: flex-start; gap: 11px; height: 24px; }

.font-name { width: 239px; }
.font-size { width: 58px; margin-left: 2px; font-size: 20px; }
.g-font .rows { padding-left: 12px; }
.grow b, .shrink b { font-size: 24px; line-height: 24px; font-weight: 500; }
.grow svg, .shrink svg { align-self: flex-start; margin-top: 3px; }
.shrink { margin-left: 2px; }
.shrink b { font-size: 20px; }
.grow { margin-left: 3px; }
.ch { font-size: 22px; }
.it { font-family: "Liberation Serif", serif; font-style: italic; font-size: 24px; }
.un { margin-left: 4px; text-decoration: underline; }
.fc { margin-left: 4px; }
.fc b { width: 24px; height: 25px; line-height: 22px; font-size: 22px; font-weight: 500; border-bottom: 6px solid #f00; }
.wen { flex-direction: column; }
.wen small { font-size: 13px; line-height: 12px; }
.wen em { font-size: 16px; line-height: 16px; font-style: normal; color: #4a82bd; }

.g-align .rows { padding-left: 12px; }
.g-align .t { margin-right: 2px; }
.g-align .sep { margin: 0 4px 0 2px; }
.g-align .on { background: #c6c6c6; border: 1px solid #808080; height: 35px; }
.pair { gap: 7px; padding-left: 5px; }
.ab { font: 14px "Noto Sans", sans-serif; fill: #595959; }
.abc { font: 14px "Noto Sans", sans-serif; fill: #404040; }
.g-align .tall { height: 85px; margin: 9px 0 0 4px; }
.g-align .wide { padding-left: 10px; }
.txt { gap: 3px; }
.g-align .wide .c { margin-left: 10px; }

.g-num .rows { padding-left: 12px; }
.num-fmt { width: 198px; }
.g-num .c { margin-right: 4px; }
.pct { font-size: 24px; }
.g-num .dec { flex-direction: column; align-items: flex-end; font-size: 14px; line-height: 14px; width: 28px; margin-right: 6px; }
.dec span { display: flex; align-items: center; gap: 2px; }

.g-style .body { padding-left: 12px; }
.g-style .big { width: 78px; }
.g-style .big:nth-child(2) { width: 98px; }
.g-style .big:nth-child(3) { width: 92px; }
.g-cell .body { padding-left: 11px; }
.g-cell .big { width: 62px; }
.g-edit .stack { padding: 4px 0 0 17px; }
.g-edit .stack button { gap: 7px; }
.g-edit .big { width: 97px; }
.g-edit .stack + .big { margin-left: 12px; }
.g-add .body { justify-content: center; }
.collapse { margin: auto 12px 3px auto; }

/* name box and formula bar */
.formula { height: 67px; flex: none; background: #e6e6e6; display: flex; align-items: center; padding: 0 6px 0 7px; }
.namebox, .fx, .fbar { height: 38px; border: 1px solid #c6c6c6; background: #fdfdfd; display: flex; align-items: center; }
.namebox { width: 152px; padding: 0 10px 0 6px; color: #444; }
.namebox input { flex: 1; }
.grip { width: 4px; height: 16px; margin: 0 21px 0 20px; background: repeating-linear-gradient(#aaa 0 3px, transparent 3px 6px); }
.fx { width: 164px; justify-content: space-around; margin-right: 4px; }
.fx button { width: 40px; }
.fxb { font: italic bold 24px/30px "Liberation Serif", serif; color: #666; }
.fxb i + i { font-size: 18px; padding-top: 6px; }
.fbar { flex: 1; padding-right: 7px; }
.fbar input { flex: 1; }

/* worksheet */
.sheet { flex: 1; min-height: 0; display: flex; background: #e6e6e6; }
.grid { flex: 1; min-width: 0; overflow: hidden; background: #fff; border-right: 1px solid #999; border-bottom: 1px solid #999; font-size: 21px; font-weight: 300; color: #000; }
table { width: 100%; table-layout: fixed; border-spacing: 0; }
.wr { width: 43px; } .w100 { width: 100px; } .w104 { width: 104px; } .w132 { width: 132px; }
.w156 { width: 156px; } .w157 { width: 157px; } .w222 { width: 222px; } .w223 { width: 223px; }
th, td { height: 28px; line-height: 24px; padding: 2px 0 0; border: solid #d4d4d4; border-width: 0 1px 1px 0; white-space: nowrap; overflow: hidden; }
th { background: #e6e6e6; font-weight: 300; border-color: #b5b5b5; }
thead th { border-bottom-color: #999; }
tbody th { border-right-color: #999; }
thead .sel { background: #d2d2d2; color: #217346; border-bottom: 2px solid #217346; }
tbody .sel { background: #d2d2d2; color: #217346; border-right: 2px solid #217346; }
.corner { background: linear-gradient(135deg, transparent 50%, #b4b4b4 50%) no-repeat 19px 4px / 20px 20px #e6e6e6; }
td { padding-left: 4px; }
.heads th { height: 70px; vertical-align: bottom; }
.heads td { background: #c0c0c0; border-color: #000; padding: 1px 4px 0; text-align: center; white-space: normal; font: 600 29px/34px "Liberation Serif", "Noto Serif CJK SC", "Noto Sans CJK SC", serif; }
.heads td:nth-child(n+16) { background: #fff; border-color: #d4d4d4; }
.rec td:nth-child(2), .rec td:nth-child(4), .rec td:nth-child(5), .rec td:nth-child(6), .rec td:nth-child(8), .rec td:nth-child(11) { background: linear-gradient(135deg, #008000 50%, transparent 50%) no-repeat 0 0 / 9px 9px; }
td.cursor { position: relative; overflow: visible; }
.cursor::before { content: ""; position: absolute; inset: -2px; border: 2px solid #217346; }
.cursor::after { content: ""; position: absolute; right: -4px; bottom: -4px; width: 7px; height: 7px; background: #217346; border: 1px solid #fff; border-width: 1px 0 0 1px; }

.vscroll { width: 31px; padding: 1px 4px 0 3px; display: flex; flex-direction: column; margin-bottom: -1px; }
.vscroll button, .hscroll button, .thumb { border: 1px solid #999; background: #fff; }
.vscroll button { height: 26px; width: 24px; }
.vtrack { flex: 1; background: #f3f3f3; width: 24px; }
.vtrack .thumb { height: 96%; }
.htrack { flex: 1; background: #f3f3f3; }
.htrack .thumb { height: 26px; width: 93%; }

.sheetbar { height: 34px; flex: none; background: #e6e6e6; display: flex; align-items: center; border-bottom: 1px solid #c6c6c6; }
.nav { width: 33px; }
.nav:first-child { margin-left: 16px; }
.sheet-tab { width: 36px; height: 30px; margin: -1px 38px 0 33px; align-self: flex-start; background: #fff; border: solid #999; border-width: 0 1px; border-bottom: 2px solid #217346; color: #217346; font-size: 19px; position: relative; }
.sheetbar .grip { margin: 0 17px 0 auto; }
.hscroll { width: 38%; display: flex; margin-right: 28px; }
.hscroll button { width: 26px; height: 26px; }

.status { height: 32px; flex: none; display: flex; align-items: center; padding: 0 0 2px 9px; background: #f3f3f3; }
.acc { margin-left: 30px; gap: 2px; }
.disp { margin: 0 27px 0 auto; gap: 2px; }
.view { width: 60px; height: 32px; margin-bottom: -2px; padding-bottom: 2px; }
.view.on { background: #c6c6c6; }
.zb { width: 12px; }
.view + .zb { margin-left: 8px; }
input[type=range] { appearance: none; width: 149px; height: 18px; margin: 0 8px; background: linear-gradient(#262626, #262626) no-repeat center / 100% 2px; }
input[type=range]::-webkit-slider-thumb { appearance: none; width: 8px; height: 17px; background: #444; }
.pc { margin: 0 29px 0 18px; }
```
